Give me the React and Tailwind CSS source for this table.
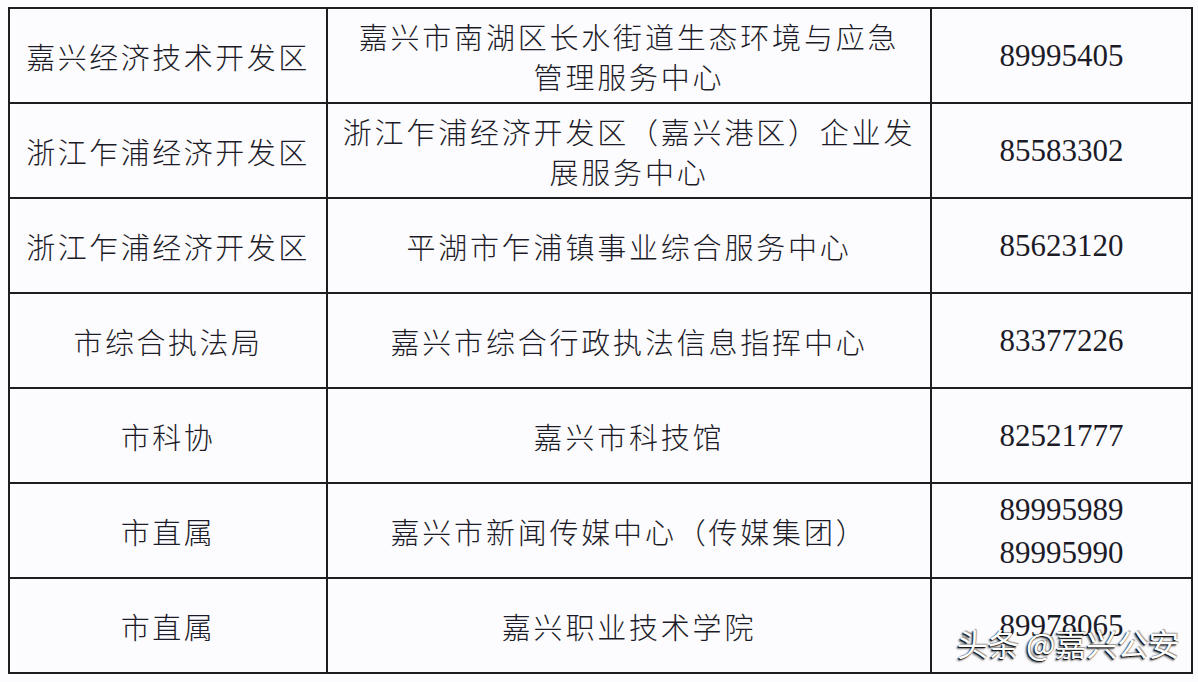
const rows = [
  {
    unit: "嘉兴经济技术开发区",
    org: ["嘉兴市南湖区长水街道生态环境与应急", "管理服务中心"],
    tel: ["89995405"],
  },
  {
    unit: "浙江乍浦经济开发区",
    org: ["浙江乍浦经济开发区（嘉兴港区）企业发", "展服务中心"],
    tel: ["85583302"],
  },
  { unit: "浙江乍浦经济开发区", org: ["平湖市乍浦镇事业综合服务中心"], tel: ["85623120"] },
  { unit: "市综合执法局", org: ["嘉兴市综合行政执法信息指挥中心"], tel: ["83377226"] },
  { unit: "市科协", org: ["嘉兴市科技馆"], tel: ["82521777"] },
  { unit: "市直属", org: ["嘉兴市新闻传媒中心（传媒集团）"], tel: ["89995989", "89995990"] },
  { unit: "市直属", org: ["嘉兴职业技术学院"], tel: ["89978065"] },
];

const cjk = "font-['Noto_Sans_CJK_SC',sans-serif]";

const App = () => {
  return (
    <div className="relative w-[1198px] h-[682px] bg-[#fcfcfe] pl-[8px] pt-[7px] overflow-hidden">
      <table className="table-fixed border-collapse text-[#1c1b28]">
        <colgroup>
          <col className="w-[318px]" />
          <col className="w-[604px]" />
          <col className="w-[261px]" />
        </colgroup>
        <tbody>
          {rows.map((r, i) => (
            <tr key={i} className="h-[95px]">
              <td
                className={`border-2 border-[#1e1e1e] text-center align-middle text-[29px] font-light tracking-[2.5px] leading-[40px] ${cjk}`}
              >
                {r.unit}
              </td>
              <td
                className={`border-2 border-[#1e1e1e] text-center align-middle text-[29px] font-light tracking-[2.8px] leading-[40px] whitespace-nowrap ${cjk}`}
              >
                {r.org.map((line, j) => (
                  <div key={j}>{line}</div>
                ))}
              </td>
              <td className="border-2 border-[#1e1e1e] text-center align-middle text-[31px] leading-[43px] font-['Liberation_Serif',serif]">
                {r.tel.map((t, j) => (
                  <div key={j}>{t}</div>
                ))}
              </td>
            </tr>
          ))}
        </tbody>
      </table>
      <div
        className={`absolute left-[957px] top-[621px] text-white text-[31px] leading-[44px] ${cjk} [text-shadow:-1px_1px_1px_rgba(0,0,0,0.95),-2px_2px_2px_rgba(0,0,0,0.5),1px_-1px_1px_rgba(0,0,0,0.4)]`}
      >
        头条 @嘉兴公安
      </div>
    </div>
  );
};

export default App;
